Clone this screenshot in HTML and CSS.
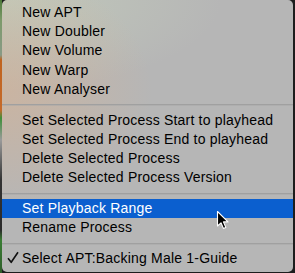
FILE: index.html
```html
<!DOCTYPE html>
<html>
<head>
<meta charset="utf-8">
<link rel="stylesheet" href="styles.css">
</head>
<body>
<div class="screen">
  <div class="edge"></div>
  <div class="menu">
    <div class="item">New APT</div>
    <div class="item">New Doubler</div>
    <div class="item">New Volume</div>
    <div class="item">New Warp</div>
    <div class="item">New Analyser</div>
    <div class="sep"></div>
    <div class="item">Set Selected Process Start to playhead</div>
    <div class="item">Set Selected Process End to playhead</div>
    <div class="item">Delete Selected Process</div>
    <div class="item">Delete Selected Process Version</div>
    <div class="sep"></div>
    <div class="item active">Set Playback Range</div>
    <div class="item">Rename Process</div>
    <div class="sep"></div>
    <div class="item checked"><svg class="check" width="12" height="13" viewBox="0 0 12 13"><path d="M1 7.2 L4.2 11.3 L11 1.2" fill="none" stroke="#111" stroke-width="1.6" stroke-linejoin="round"/></svg>Select APT:Backing Male 1-Guide</div>
  </div>
  <svg class="cursor" width="14" height="20" viewBox="0 0 14 20"><path d="M1.5 1.5 L1.5 16 L5 12.8 L7.4 18.4 L9.8 17.4 L7.4 11.9 L12 11.9 Z" fill="#000" stroke="#fff" stroke-width="1.1" stroke-linejoin="round"/></svg>
</div>
</body>
</html>
```
FILE: styles.css
```css
html, body {
  margin: 0;
  padding: 0;
  background: #1d1d1d;
}
.screen {
  position: relative;
  width: 295px;
  height: 273px;
  display: flex;
  align-items: flex-start;
  overflow: hidden;
  background: #1d1d1d;
}
.edge {
  width: 2px;
  height: 273px;
  flex: none;
  background: linear-gradient(to bottom, #4d7a3a 0, #7d9a6a 20px, #889a86 55px, #c0631f 60px, #c56a2a 110px, #3f8f3a 118px, #9a9a9a 140px, #333 180px, #2a2a2a 230px, #3a7d34 240px, #2e5e2a 273px);
}
.menu {
  width: 291px;
  flex: none;
  box-sizing: border-box;
  padding: 3px 0 3.5px 0;
  border-radius: 5px;
  background:
    radial-gradient(ellipse 150px 120px at 0 90px, rgba(222, 178, 140, 0.5), rgba(222, 178, 140, 0) 100%),
    radial-gradient(ellipse 220px 90px at 0 0, rgba(196, 206, 188, 0.8), rgba(196, 206, 188, 0) 100%),
    #b6b6b6;
  font-family: "Liberation Sans", Arial, sans-serif;
  font-size: 14px;
  letter-spacing: 0.2px;
  color: #000;
}
.item {
  height: 19.2px;
  line-height: 19.2px;
  padding-left: 20px;
  white-space: nowrap;
}
.item.active {
  background: #0b5fcf;
  color: #fff;
}
.sep {
  height: 11.6px;
  display: flex;
  align-items: center;
}
.sep::before {
  content: "";
  display: block;
  width: 100%;
  height: 1px;
  background: #a0a0a0;
  box-shadow: 0 1px 0 rgba(165, 165, 165, 0.5);
}
.check {
  margin-left: -15px;
  margin-right: 3px;
  vertical-align: -1px;
}
.cursor {
  position: absolute;
  left: 216px;
  top: 210px;
}
```
